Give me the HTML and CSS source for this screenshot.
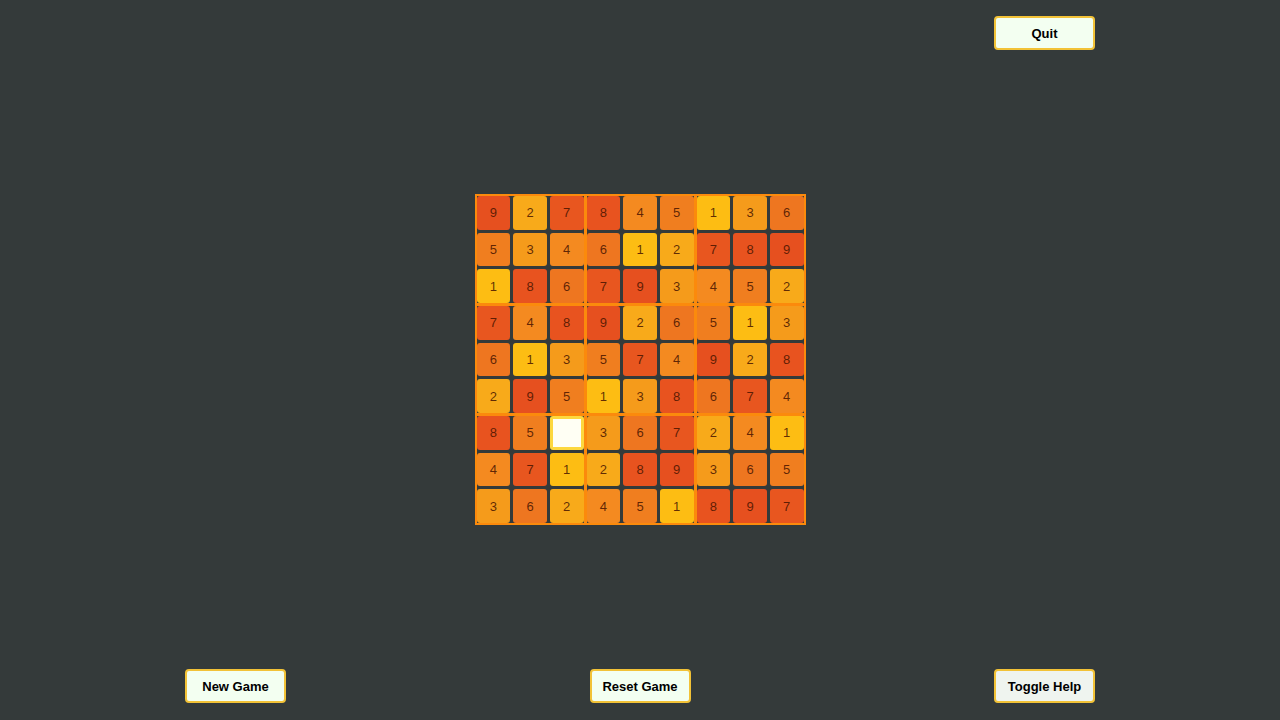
FILE: index.html
```html
<!DOCTYPE html>
<html>
<head>
  <meta charset="UTF-8">
  <title>Sudoku</title>
  <link rel="stylesheet" href="styles.css">
</head>
<body>
  <div class="page">
    <div class="topbar">
      <button class="button">Quit</button>
    </div>

    <div class="board-wrap">
      <div class="board" id="board"></div>
    </div>

    <div class="bottombar">
      <button class="button">New Game</button>
      <button class="button">Reset Game</button>
      <button class="button help">Toggle Help</button>
    </div>
  </div>

  <script>
    // 0 = empty (selected) cell
    var rows = [
      "927845136",
      "534612789",
      "186793452",
      "748926513",
      "613574928",
      "295138674",
      "850367241",
      "471289365",
      "362451897"
    ];
    var board = document.getElementById("board");
    for (var b = 0; b < 9; b++) {
      var box = document.createElement("div");
      box.className = "box";
      var br = Math.floor(b / 3) * 3, bc = (b % 3) * 3;
      for (var i = 0; i < 9; i++) {
        var r = br + Math.floor(i / 3), c = bc + (i % 3);
        var v = rows[r].charAt(c);
        var cell = document.createElement("div");
        if (v == "0") {
          cell.className = "cell empty";
        } else {
          cell.className = "cell n" + v;
          cell.innerHTML = v;
        }
        box.appendChild(cell);
      }
      board.appendChild(box);
    }
  </script>
</body>
</html>
```

FILE: styles.css
```css
html, body {
	margin: 0;
	padding: 0;
	height: 100%;
}
body {
	background: #343a3a;
	font-family: "Liberation Sans", Arial, sans-serif;
}
.page {
	width: 910px;
	height: 100vh;
	margin: 0 auto;
	padding: 16px 0 17px 0;
	box-sizing: border-box;
	display: flex;
	flex-direction: column;
}
.topbar {
	display: flex;
	justify-content: flex-end;
}
.bottombar {
	display: flex;
	justify-content: space-between;
}
.board-wrap {
	flex: 1;
	display: flex;
	align-items: center;
	justify-content: center;
}
.button {
	width: 101px;
	height: 34px;
	background: #f3fff1;
	border: 2px solid #f2c237;
	border-radius: 4px;
	color: #000000;
	font-family: "Liberation Sans", Arial, sans-serif;
	font-size: 13px;
	font-weight: bold;
	padding: 0;
	cursor: pointer;
}
.help {
	background: #eff4ef;
}
.board {
	width: 327px;
	padding: 2px;
	background: #fb8a0c;
	display: grid;
	grid-template-columns: repeat(3, 107px);
	gap: 3px;
}
.box {
	background: #343a3a;
	display: grid;
	grid-template-columns: repeat(3, 1fr);
	grid-template-rows: repeat(3, 33.67px);
	gap: 3px;
}
.cell {
	border-radius: 3px;
	display: flex;
	align-items: center;
	justify-content: center;
	font-size: 13px;
	color: rgba(70, 20, 0, 0.85);
}
.empty {
	background: #fffff4;
	border: 3px solid #fdd83e;
	box-sizing: border-box;
}
.n1 { background: #fdbd13; }
.n2 { background: #f8aa1a; }
.n3 { background: #f59b1b; }
.n4 { background: #f48a20; }
.n5 { background: #f07e1f; }
.n6 { background: #ee7620; }
.n7 { background: #e8561f; }
.n8 { background: #e8531f; }
.n9 { background: #e6501f; }
```
